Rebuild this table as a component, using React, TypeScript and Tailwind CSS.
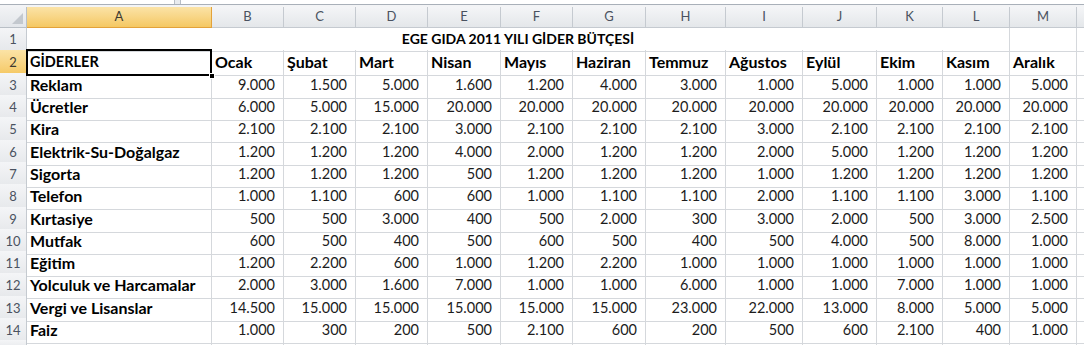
import React from "react";

const COLS = "grid grid-cols-[27px_185px_72px_72px_72px_73px_72px_73px_80px_77px_74px_66px_67px_67px_1fr]";
const letters = ["A", "B", "C", "D", "E", "F", "G", "H", "I", "J", "K", "L", "M"];
const months = ["Ocak", "Şubat", "Mart", "Nisan", "Mayıs", "Haziran", "Temmuz", "Ağustos", "Eylül", "Ekim", "Kasım", "Aralık"];

const data: [string, string[]][] = [
  ["Reklam", ["9.000", "1.500", "5.000", "1.600", "1.200", "4.000", "3.000", "1.000", "5.000", "1.000", "1.000", "5.000"]],
  ["Ücretler", ["6.000", "5.000", "15.000", "20.000", "20.000", "20.000", "20.000", "20.000", "20.000", "20.000", "20.000", "20.000"]],
  ["Kira", ["2.100", "2.100", "2.100", "3.000", "2.100", "2.100", "2.100", "3.000", "2.100", "2.100", "2.100", "2.100"]],
  ["Elektrik-Su-Doğalgaz", ["1.200", "1.200", "1.200", "4.000", "2.000", "1.200", "1.200", "2.000", "5.000", "1.200", "1.200", "1.200"]],
  ["Sigorta", ["1.200", "1.200", "1.200", "500", "1.200", "1.200", "1.200", "1.000", "1.200", "1.200", "1.200", "1.200"]],
  ["Telefon", ["1.000", "1.100", "600", "600", "1.000", "1.100", "1.100", "2.000", "1.100", "1.100", "3.000", "1.100"]],
  ["Kırtasiye", ["500", "500", "3.000", "400", "500", "2.000", "300", "3.000", "2.000", "500", "3.000", "2.500"]],
  ["Mutfak", ["600", "500", "400", "500", "600", "500", "400", "500", "4.000", "500", "8.000", "1.000"]],
  ["Eğitim", ["1.200", "2.200", "600", "1.000", "1.200", "2.200", "1.000", "1.000", "1.000", "1.000", "1.000", "1.000"]],
  ["Yolculuk ve Harcamalar", ["2.000", "3.000", "1.600", "7.000", "1.000", "1.000", "6.000", "1.000", "1.000", "7.000", "1.000", "1.000"]],
  ["Vergi ve Lisanslar", ["14.500", "15.000", "15.000", "15.000", "15.000", "15.000", "23.000", "22.000", "13.000", "8.000", "5.000", "5.000"]],
  ["Faiz", ["1.000", "300", "200", "500", "2.100", "600", "200", "500", "600", "2.100", "400", "1.000"]],
];

// heights for rows 1..14
const rowH = ["h-[22px]", "h-[23px]", "h-[22px]", "h-[22px]", "h-[23px]", "h-[22px]", "h-[22px]", "h-[23px]", "h-[22px]", "h-[22px]", "h-[22px]", "h-[23px]", "h-[22px]", "h-[22px]"];

const grid = "border-r border-b border-[#d5d8dc]";
const rowHdr = "flex items-center justify-center border-r border-b border-[#c5cad0] bg-gradient-to-b from-[#f4f5f7] to-[#e6e8eb] text-[13px] text-[#4a5260]";
const rowHdrSel = "flex items-center justify-center border-r border-b border-[#e3a23a] bg-gradient-to-b from-[#fbe3a6] to-[#f5c862] text-[13px] text-[#3d3a30]";

function RowHeader({ n, sel }: { n: number; sel?: boolean }) {
  return <div className={sel ? rowHdrSel : rowHdr}>{n}</div>;
}

export default function App() {
  return (
    <div className="w-[1084px] h-[345px] overflow-hidden bg-white" style={{ fontFamily: "Lato, 'Open Sans', sans-serif" }}>
      {/* formula bar bottom edge */}
      <div className="flex h-[5px] bg-[#e8ebef] border-b border-[#a9b0b9]">
        <div className="w-[175px] bg-white border-r border-[#b8bec6]" />
        <div className="w-[5px]" />
        <div className="flex-1 bg-white border-l border-[#b8bec6]" />
      </div>
      <div className="h-[2px] bg-[#f3f4f6]" />

      {/* column headers */}
      <div className={`${COLS} h-[21px]`}>
        <div className="relative border-r border-b border-[#b9bfc6] bg-gradient-to-b from-[#f2f3f5] to-[#e3e6ea]">
          <div className="absolute right-[3px] bottom-[3px] w-0 h-0 border-l-[11px] border-l-transparent border-b-[11px] border-b-[#c3c8ce]" />
        </div>
        {letters.map((l, i) => (
          <div
            key={l}
            className={
              i === 0
                ? "flex items-center justify-center border-r border-b border-[#e3a23a] bg-gradient-to-b from-[#fbe3a6] to-[#f5c862] text-[13px] text-[#3d3a30]"
                : "flex items-center justify-center border-r border-b border-[#c5cad0] bg-gradient-to-b from-[#f4f5f7] to-[#e4e7ea] text-[13px] text-[#4a5260]"
            }
          >
            {l}
          </div>
        ))}
        <div className="border-b border-[#c5cad0] bg-gradient-to-b from-[#f4f5f7] to-[#e4e7ea]" />
      </div>

      {/* row 1: merged title */}
      <div className={`${COLS} ${rowH[0]}`}>
        <RowHeader n={1} />
        <div className={`col-span-12 ${grid} flex items-end justify-center pb-[2px] text-[14px] font-bold text-black`}>
          EGE GIDA 2011 YILI GİDER BÜTÇESİ
        </div>
        <div className={grid} />
        <div className="border-b border-[#d5d8dc]" />
      </div>

      {/* row 2: headers */}
      <div className={`${COLS} ${rowH[1]}`}>
        <RowHeader n={2} sel />
        <div className={`relative ${grid} flex items-end pl-[3px] pb-[2px] text-[14.5px] font-bold text-black`}>
          GİDERLER
          <div className="absolute -left-[1px] -top-[1px] -right-[1px] -bottom-[1px] border-2 border-black" />
          <div className="absolute -right-[4px] -bottom-[4px] w-[6px] h-[6px] bg-black border border-white" />
        </div>
        {months.map((m) => (
          <div key={m} className={`${grid} flex items-end pl-[3px] pb-[1px] text-[16px] font-bold text-black whitespace-nowrap`}>
            {m}
          </div>
        ))}
        <div className="border-b border-[#d5d8dc]" />
      </div>

      {/* data rows */}
      {data.map(([label, vals], r) => (
        <div key={label} className={`${COLS} ${rowH[r + 2]}`}>
          <RowHeader n={r + 3} />
          <div className={`${grid} flex items-end pl-[3px] pb-[1px] text-[16px] font-bold text-black whitespace-nowrap`}>{label}</div>
          {vals.map((v, i) => (
            <div key={i} className={`${grid} flex items-end justify-end pr-[8px] pb-[2px] text-[14.5px] text-[#1c1c1c]`}>
              {v}
            </div>
          ))}
          <div className="border-b border-[#d5d8dc]" />
        </div>
      ))}

      {/* partial row 15 */}
      <div className={`${COLS} h-[10px]`}>
        <div className={rowHdr} />
        {letters.map((l) => (
          <div key={l} className={grid} />
        ))}
        <div />
      </div>
    </div>
  );
}
